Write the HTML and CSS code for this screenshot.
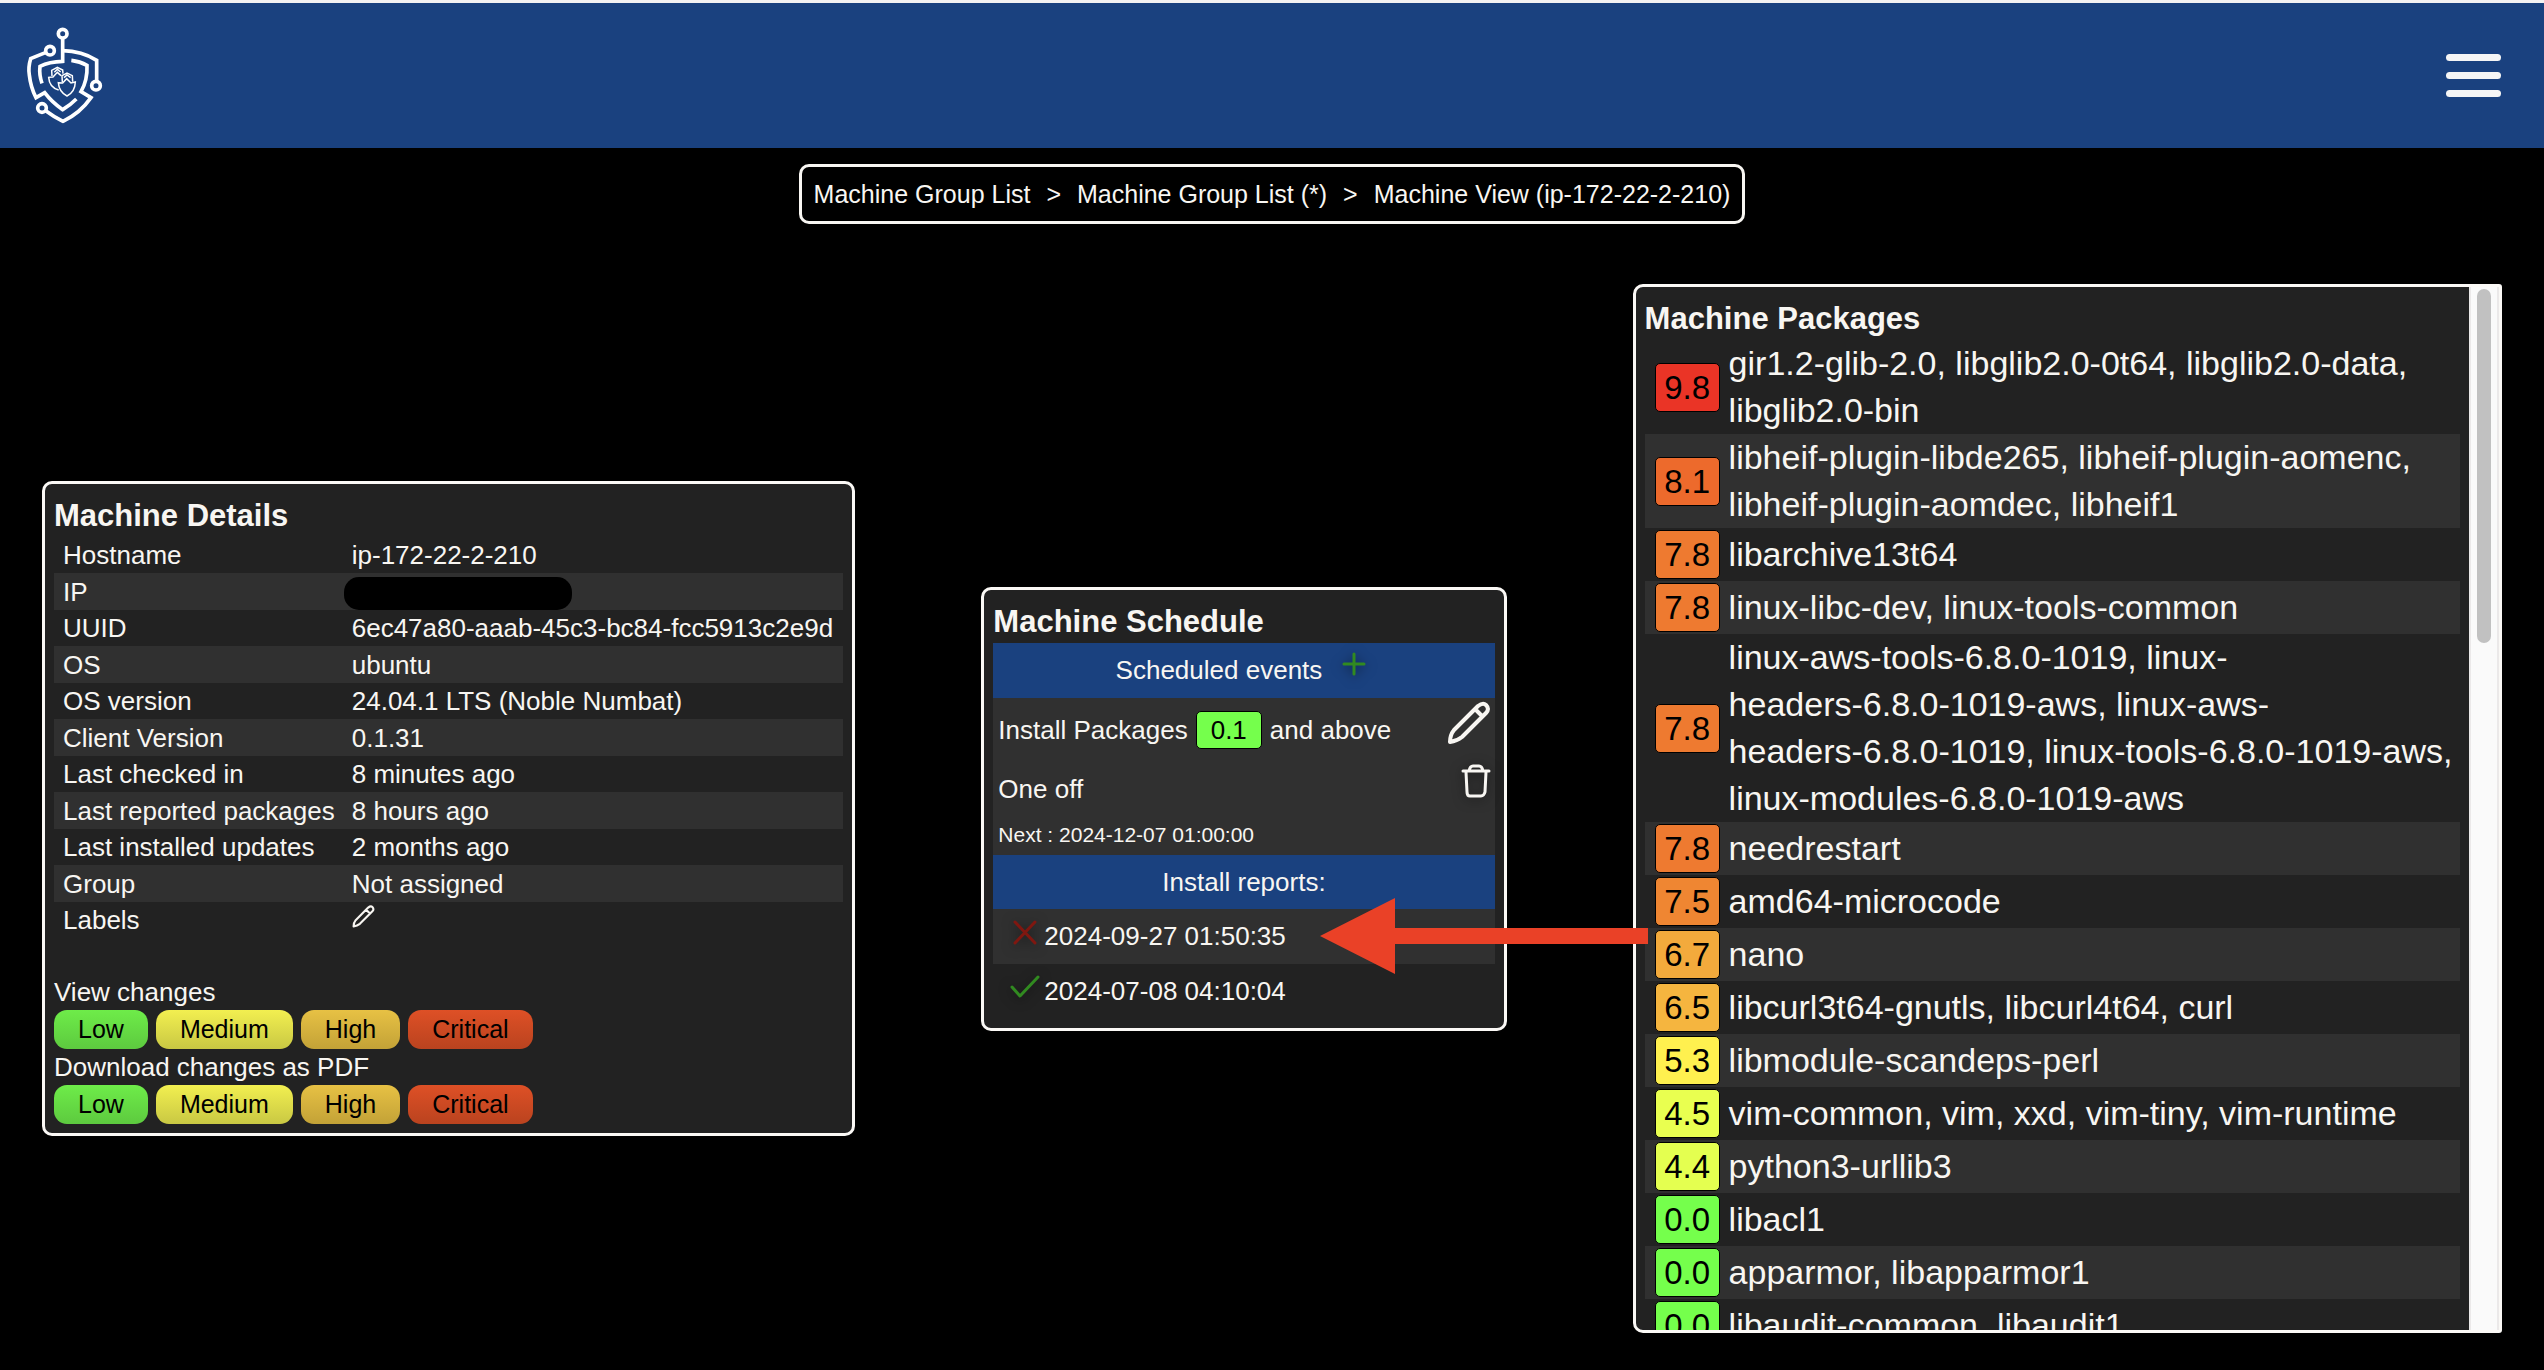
FILE: index.html
```html
<!DOCTYPE html>
<html lang="en">
<head>
<meta charset="utf-8">
<title>Machine View</title>
<link rel="stylesheet" href="styles.css">
</head>
<body>
<header class="topbar">
  <a class="logo" href="#" aria-label="Home">
    <svg viewBox="78 78 231 297" fill="none" stroke="#fff" stroke-width="11">
      <circle cx="188" cy="101" r="13"/>
      <circle cx="150" cy="152" r="13"/>
      <circle cx="288" cy="257" r="13"/>
      <circle cx="126" cy="324" r="13"/>
      <path d="M188 114V184Q148 185 120 199Q117 225 126 250"/>
      <path d="M138 157L92 176Q84 202 88 225Q92 262 108 293L134 278Q156 307 188 329Q210 316 229 297"/>
      <path d="M188 152Q246 153 290 181V244"/>
      <path d="M214 181Q240 184 261 196Q263 240 243 275L273 293Q240 340 189 364Q161 350 137 332"/>
      <g stroke-width="4.500">
        <path d="M175 248L188 249L200 236L213 249L226 246Q225 276 201 288Q177 276 175 248Z"/>
        <path d="M187 246L186 227L201 219L217 227L218 245M192 233L201 225L212 233"/>
        <path d="M176 270Q148 262 146 232L159 231L172 217L183 227"/>
        <path d="M156 228L155 211L172 202L188 210L189 221M163 217L172 208L182 216"/>
      </g>
    </svg>
  </a>
  <button class="menu" type="button" aria-label="Menu"><span></span><span></span><span></span></button>
</header>

<main>
  <nav class="crumbs" aria-label="Breadcrumb">
    <a href="#">Machine Group List</a><span>&gt;</span><a href="#">Machine Group List (*)</a><span>&gt;</span><a href="#">Machine View (ip-172-22-2-210)</a>
  </nav>

  <div class="cards">
    <section class="card">
      <h2>Machine Details</h2>
      <table class="details">
        <tr><th scope="row">Hostname</th><td>ip-172-22-2-210</td></tr>
        <tr><th scope="row">IP</th><td><span class="redacted"></span></td></tr>
        <tr><th scope="row">UUID</th><td>6ec47a80-aaab-45c3-bc84-fcc5913c2e9d</td></tr>
        <tr><th scope="row">OS</th><td>ubuntu</td></tr>
        <tr><th scope="row">OS version</th><td>24.04.1 LTS (Noble Numbat)</td></tr>
        <tr><th scope="row">Client Version</th><td>0.1.31</td></tr>
        <tr><th scope="row">Last checked in</th><td>8 minutes ago</td></tr>
        <tr><th scope="row">Last reported packages</th><td>8 hours ago</td></tr>
        <tr><th scope="row">Last installed updates</th><td>2 months ago</td></tr>
        <tr><th scope="row">Group</th><td>Not assigned</td></tr>
        <tr><th scope="row">Labels</th><td><button class="icon label-edit" type="button" aria-label="Edit labels"><svg width="23" height="23" viewBox="0 0 44 44" fill="none" stroke="#f8f6f2" stroke-width="4" stroke-linejoin="round"><path d="M3 41Q3 34 7 29L31 5Q36 1 39 4Q43 8 39 12L15 36Q10 40 3 41ZM27 9L34 16"/></svg></button></td></tr>
      </table>
      <p class="group-label first">View changes</p>
      <div class="levels">
        <button class="low" type="button">Low</button>
        <button class="medium" type="button">Medium</button>
        <button class="high" type="button">High</button>
        <button class="critical" type="button">Critical</button>
      </div>
      <p class="group-label">Download changes as PDF</p>
      <div class="levels">
        <button class="low" type="button">Low</button>
        <button class="medium" type="button">Medium</button>
        <button class="high" type="button">High</button>
        <button class="critical" type="button">Critical</button>
      </div>
    </section>

    <section class="card schedule">
      <h2>Machine Schedule</h2>
      <h3>Scheduled events
        <button class="icon add" type="button" aria-label="Add event"><svg width="36" height="36" viewBox="0 0 36 36" fill="none" stroke="#318a20" stroke-width="3" stroke-linecap="round"><path d="M18 8V28M8 18H28"/></svg></button>
      </h3>
      <div class="event">
        <div class="event-what">
          <span>Install Packages</span><span class="min-score">0.1</span><span>and above</span>
          <button class="icon end" type="button" aria-label="Edit event"><svg width="44" height="44" viewBox="0 0 44 44" fill="none" stroke="#f8f6f2" stroke-width="4" stroke-linejoin="round"><path d="M3 41Q3 34 7 29L31 5Q36 1 39 4Q43 8 39 12L15 36Q10 40 3 41ZM28 8L35 15"/></svg></button>
        </div>
        <div class="event-when">
          <span>One off</span>
          <button class="icon end shadowed" type="button" aria-label="Delete event"><svg width="30" height="34" viewBox="0 0 30 34" fill="none" stroke="#f8f6f2" stroke-width="3" stroke-linejoin="round" stroke-linecap="round"><path d="M2 7H28M8 7Q9 2 12 2H18Q21 2 22 7M5 8L6 28Q6 32 9 32H20Q23 32 24 28L25 8"/></svg></button>
        </div>
        <div class="event-next">Next : 2024-12-07 01:00:00</div>
      </div>
      <h3 class="reports-title">Install reports:</h3>
      <div class="report striped">
        <svg class="status" width="30" height="30" viewBox="0 0 30 30" fill="none" stroke="#7f1710" stroke-width="3" stroke-linecap="round"><path d="M5 5L25 26M25 5L5 26"/></svg>
        <a href="#">2024-09-27 01:50:35</a>
        <svg class="pointer" width="328" height="76" viewBox="0 0 328 76" fill="#ea4127"><path d="M0 38L75 0V30H328V46H75V76Z"/></svg>
      </div>
      <div class="report">
        <svg class="status" width="30" height="30" viewBox="0 0 30 30" fill="none" stroke="#318a20" stroke-width="3" stroke-linecap="round" stroke-linejoin="round"><path d="M2 15L10 24L28 5"/></svg>
        <a href="#">2024-07-08 04:10:04</a>
      </div>
    </section>

    <section class="card packages">
      <div class="packages-body" tabindex="0">
        <h2>Machine Packages</h2>
        <table class="package-list">
          <tr><td><span class="score" style="background:#ea3426">9.8</span></td><td>gir1.2-glib-2.0, libglib2.0-0t64, libglib2.0-data, libglib2.0-bin</td></tr>
          <tr><td><span class="score" style="background:#ed6a2c">8.1</span></td><td>libheif-plugin-libde265, libheif-plugin-aomenc, libheif-plugin-aomdec, libheif1</td></tr>
          <tr><td><span class="score" style="background:#ee7a30">7.8</span></td><td>libarchive13t64</td></tr>
          <tr><td><span class="score" style="background:#ee7a30">7.8</span></td><td>linux-libc-dev, linux-tools-common</td></tr>
          <tr><td><span class="score" style="background:#ee7a30">7.8</span></td><td>linux-aws-tools-6.8.0-1019, linux-<span class="whole">headers-6.8.0-1019-aws,</span> linux-aws-<span class="whole">headers-6.8.0-1019,</span> <span class="whole">linux-tools-6.8.0-1019-aws,</span> <span class="whole">linux-modules-6.8.0-1019-aws</span></td></tr>
          <tr><td><span class="score" style="background:#ee7a30">7.8</span></td><td>needrestart</td></tr>
          <tr><td><span class="score" style="background:#ef8632">7.5</span></td><td>amd64-microcode</td></tr>
          <tr><td><span class="score" style="background:#f3aa3c">6.7</span></td><td>nano</td></tr>
          <tr><td><span class="score" style="background:#f5b53f">6.5</span></td><td>libcurl3t64-gnutls, libcurl4t64, curl</td></tr>
          <tr><td><span class="score" style="background:#fff04f">5.3</span></td><td>libmodule-scandeps-perl</td></tr>
          <tr><td><span class="score" style="background:#e9ff50">4.5</span></td><td>vim-common, vim, xxd, vim-tiny, vim-runtime</td></tr>
          <tr><td><span class="score" style="background:#e4ff50">4.4</span></td><td>python3-urllib3</td></tr>
          <tr><td><span class="score" style="background:#75ff4c">0.0</span></td><td>libacl1</td></tr>
          <tr><td><span class="score" style="background:#75ff4c">0.0</span></td><td>apparmor, libapparmor1</td></tr>
          <tr><td><span class="score" style="background:#75ff4c">0.0</span></td><td>libaudit-common, libaudit1</td></tr>
        </table>
      </div>
      <div class="scrollbar" aria-hidden="true"><div class="thumb"></div></div>
    </section>
  </div>
</main>
</body>
</html>
```
FILE: styles.css
```css
* {
  box-sizing: border-box;
}

body {
  margin: 0;
  background: #000;
  color: #f8f6f2;
  font: 26px/36px "Liberation Sans", Arial, Helvetica, sans-serif;
}

h2, h3, p {
  margin: 0;
}

a {
  color: inherit;
  text-decoration: none;
}

svg {
  display: block;
}

table {
  width: 100%;
  border-collapse: collapse;
}

.topbar {
  display: flex;
  align-items: center;
  justify-content: space-between;
  height: 148px;
  padding: 0 43px 0 26px;
  border-top: 3px solid #f4f2f2;
  background: #1a417f;
}

.logo svg {
  width: 77px;
  height: 99px;
}

.menu {
  display: grid;
  gap: 11px;
  width: 55px;
  padding: 0;
  border: 0;
  background: none;
}

.menu span {
  height: 7px;
  border-radius: 4px;
  background: #f5f5f5;
}

.crumbs {
  display: flex;
  gap: 16px;
  width: fit-content;
  margin: 16px auto 60px;
  padding: 9px 12px;
  border: 3px solid #f8f6f2;
  border-radius: 10px;
  font-size: 25px;
}

.cards {
  display: grid;
  grid-template-columns: 813fr 525fr 869fr;
  gap: 126px;
  align-items: center;
  padding: 0 42px;
}

.card {
  padding: 9px;
  border: 3px solid #fbf9f6;
  border-radius: 10px;
  background: #222;
}

h2 {
  padding-top: 2px;
  font-size: 31px;
  line-height: 42px;
}

.details th,
.details td {
  height: 36px;
  padding: 0 9px;
  font-weight: normal;
  text-align: left;
  white-space: nowrap;
}

.details th {
  padding-right: 8px;
}

.details td {
  width: 100%;
}

.details tr:nth-child(even) td {
  height: 37px;
}

.details tr:nth-child(even),
.package-list tr:nth-child(even) {
  background: #303030;
}

.redacted {
  display: block;
  width: 228px;
  height: 33px;
  margin: 4px 0 0 -8px;
  border-radius: 15px;
  background: #000;
}

.icon {
  display: block;
  padding: 0;
  border: 0;
  background: none;
}

.label-edit {
  margin-bottom: 8px;
}

.group-label.first {
  margin-top: 36px;
}

.levels {
  display: flex;
  gap: 8px;
}

.levels button {
  height: 39px;
  padding: 0 24px;
  border: 0;
  border-radius: 13px;
  color: #000;
  font: 25px/39px "Liberation Sans", Arial, Helvetica, sans-serif;
}

.low {
  background: linear-gradient(#6eec49, #5dca3f);
}

.medium {
  background: linear-gradient(#f2ef50, #c9c843);
}

.high {
  background: linear-gradient(#e7c144, #c3a237);
}

.critical {
  background: linear-gradient(#de5026, #ba431f);
}

h3 {
  display: flex;
  align-items: center;
  justify-content: center;
  gap: 14px;
  height: 55px;
  background: #1a417f;
  font-size: 26px;
  font-weight: normal;
}

h3.reports-title {
  height: 54px;
}

.add {
  margin-bottom: 12px;
}

.add svg,
.shadowed svg,
.status {
  filter: drop-shadow(0 2px 6px rgba(0, 0, 0, .5));
}

.event {
  background: #303030;
}

.event-what,
.event-when,
.event-next {
  display: flex;
  align-items: center;
  gap: 8px;
  padding: 0 4px 0 5px;
}

.event-what {
  height: 65px;
}

.event-when {
  height: 52px;
}

.event-next {
  height: 40px;
  font-size: 21px;
}

.end {
  margin: 0 0 15px auto;
}

.min-score {
  padding: 0 14px;
  border: 1px solid #000;
  border-radius: 5px;
  background: #75ff4c;
  color: #000;
}

.report {
  position: relative;
  display: flex;
  align-items: center;
  gap: 4px;
  height: 55px;
  padding-left: 17px;
}

.striped {
  background: #303030;
}

.status {
  margin-bottom: 8px;
}

.pointer {
  position: absolute;
  z-index: 1;
  top: -11px;
  left: 327px;
}

.packages {
  display: flex;
  height: calc(100vh - 321px);
  padding: 0;
  border-radius: 10px 3px 3px 10px;
  overflow: hidden;
}

.packages-body {
  flex: 1;
  padding: 9px;
  overflow-y: auto;
  scrollbar-width: none;
}

.scrollbar {
  width: 30px;
  padding: 2px 6px 0;
  border: solid #ebe9e9;
  border-width: 0 2px;
  background: #fafafa;
}

.thumb {
  height: 34%;
  border-radius: 8px;
  background: #c1c1c1;
}

.package-list td {
  height: 53px;
  padding: 0;
  font-size: 34px;
  line-height: 47px;
}

.package-list td:first-child {
  width: 84px;
  padding: 0 9px 0 10px;
  font-size: 33px;
}

.whole {
  white-space: nowrap;
}

.score {
  display: block;
  width: 65px;
  border: 1px solid #000;
  border-radius: 5px;
  color: #000;
  text-align: center;
}
```
